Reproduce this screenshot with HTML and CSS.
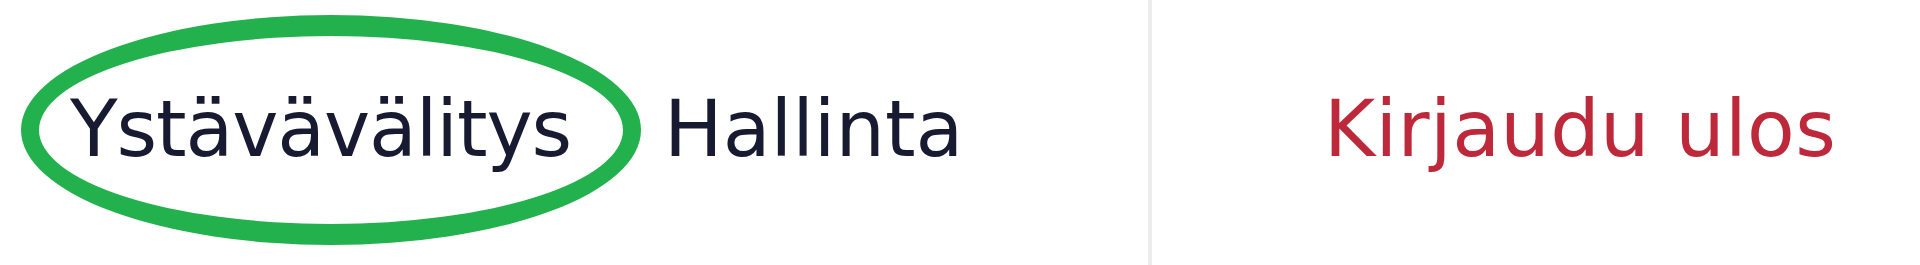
FILE: index.html
```html
<!DOCTYPE html>
<html lang="fi">
<head>
<meta charset="utf-8">
<title>Ystävävälitys</title>
<link rel="stylesheet" href="styles.css">
</head>
<body>
<header class="bar">
  <nav class="nav">
    <a class="nav-link circled" href="#">Ystävävälitys<span class="mark"></span></a>
    <a class="nav-link" href="#">Hallinta</a>
  </nav>
  <div class="divider"></div>
  <a class="logout" href="#">Kirjaudu ulos</a>
</header>
</body>
</html>
```

FILE: styles.css
```css
html, body {
  margin: 0;
  padding: 0;
  background: #ffffff;
}

.bar {
  display: flex;
  align-items: center;
  height: 265px;
  padding-left: 70px;
  padding-bottom: 7px;
  font-family: "DejaVu Sans", sans-serif;
  font-size: 78px;
  line-height: 1;
  box-sizing: border-box;
}

.nav {
  display: flex;
  align-items: center;
  gap: 93px;
  width: 1078px;
}

.nav-link {
  display: block;
  color: #171a30;
  text-decoration: none;
  position: relative;
}

.circled {
  letter-spacing: -1.1px;
}

.mark {
  position: absolute;
  left: -49px;
  top: -75px;
  width: 620px;
  height: 230px;
  border-style: solid;
  border-color: #22b14c;
  border-width: 21px 18px;
  border-radius: 50%;
  box-sizing: border-box;
  pointer-events: none;
}

.divider {
  align-self: stretch;
  width: 4px;
  margin-bottom: -7px;
  background: #ececec;
}

.logout {
  display: block;
  margin-left: 172px;
  letter-spacing: 0.4px;
  color: #bd283b;
  text-decoration: none;
}
```
